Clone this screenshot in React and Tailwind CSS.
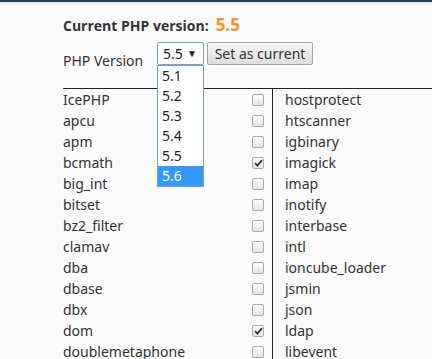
const left = [
  ['IcePHP', false],
  ['apcu', false],
  ['apm', false],
  ['bcmath', true],
  ['big_int', false],
  ['bitset', false],
  ['bz2_filter', false],
  ['clamav', false],
  ['dba', false],
  ['dbase', false],
  ['dbx', false],
  ['dom', true],
  ['doublemetaphone', false],
]

const right = [
  'hostprotect',
  'htscanner',
  'igbinary',
  'imagick',
  'imap',
  'inotify',
  'interbase',
  'intl',
  'ioncube_loader',
  'jsmin',
  'json',
  'ldap',
  'libevent',
]

const versions = ['5.1', '5.2', '5.3', '5.4', '5.5', '5.6']

function Checkbox({ checked }) {
  return (
    <div className="flex h-[12px] w-[12px] items-center justify-center rounded-[2px] border border-[#a9a9a9] bg-gradient-to-b from-[#fdfdfd] to-[#e4e4e4]">
      {checked && (
        <svg width="9" height="8" viewBox="0 0 9 8">
          <path d="M1 4.2 L3.4 6.6 L8 1.2" fill="none" stroke="#333" strokeWidth="1.8" />
        </svg>
      )}
    </div>
  )
}

export default function App() {
  return (
    <div className="relative h-[359px] w-[432px] overflow-hidden bg-[#fafafa] font-['Noto_Sans',sans-serif] text-[#333]">
      <div className="h-[2px] bg-[#2c3e50]" />
      <div className="h-[4px] bg-gradient-to-b from-[#e6e6e6] to-[#fafafa]" />

      <div className="pl-[63px]">
        <div className="mt-[9px] flex items-baseline gap-[7px] font-['Open_Sans',sans-serif]">
          <span className="text-[14px] font-bold leading-[20px] text-[#333]">Current PHP version:</span>
          <span className="text-[17px] font-bold leading-[20px] text-[#f7931e]">5.5</span>
        </div>

        <div className="relative mt-[6px] flex h-[23px] items-center">
          <span className="mt-[13px] w-[94px] text-[14px] text-[#333]">PHP Version</span>
          <div className="flex h-[23px] w-[47px] items-center justify-between rounded-[2px] border border-[#7da2ce] bg-white pl-[5px] pr-[6px] text-[14px] text-[#222]">
            <span>5.5</span>
            <span className="text-[10px]">▼</span>
          </div>
          <button className="ml-[3px] h-[23px] w-[106px] rounded-[2px] border border-[#a6a6a6] bg-gradient-to-b from-[#f6f6f6] to-[#dddddd] text-[14px] text-[#333]">
            Set as current
          </button>

          <div className="absolute left-[94px] top-[23px] z-10 w-[47px] border border-[#7f9db9] bg-white">
            {versions.map((v) => (
              <div
                key={v}
                className={`h-[20px] pl-[4px] text-[14px] leading-[20px] ${v === '5.6' ? 'bg-[#3399ff] text-white' : 'text-[#222]'}`}
              >
                {v}
              </div>
            ))}
          </div>
        </div>

        <div className="mt-[23px] border-t border-[#222]">
          {left.map(([name, checked], i) => (
            <div key={name} className="flex h-[21px] items-center text-[14px] leading-[21px]">
              <span className="w-[189px]">{name}</span>
              <Checkbox checked={checked} />
              <div className="ml-[8px] flex h-full items-center border-l border-[#222] pl-[12px]">
                {right[i]}
              </div>
            </div>
          ))}
        </div>
      </div>
    </div>
  )
}
